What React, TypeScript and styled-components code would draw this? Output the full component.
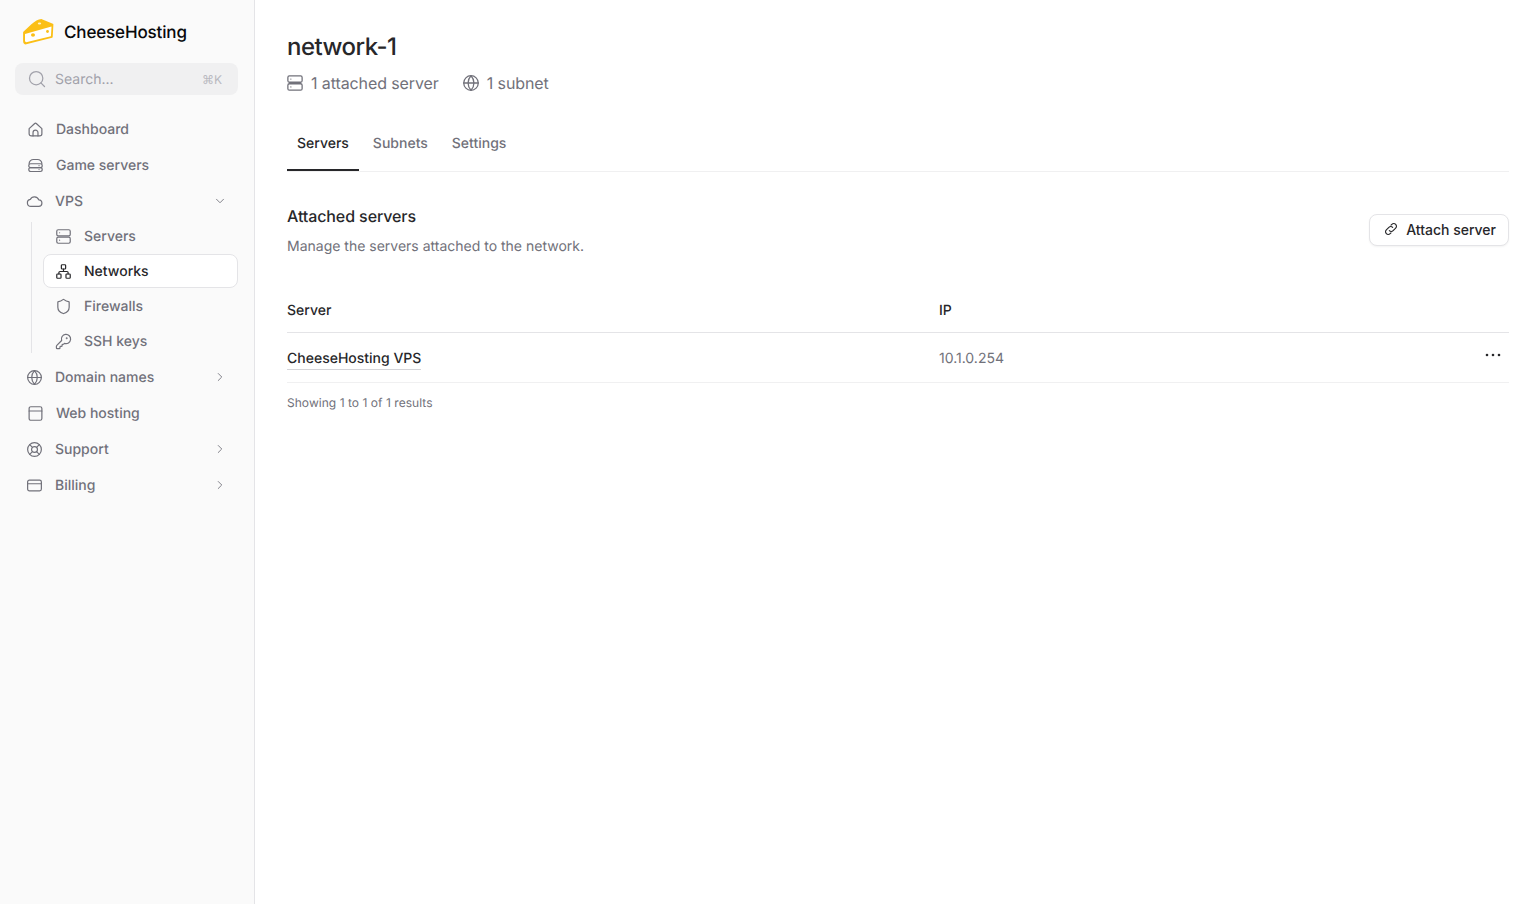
import React from "react";
import styled, { createGlobalStyle } from "styled-components";
import { ChevronDown, ChevronRight, KeyRound, Search } from "lucide-react";

const GlobalStyle = createGlobalStyle`
  html, body { margin: 0; padding: 0; height: 100%; background: #fff; }
  body {
    font-family: Inter, "Liberation Sans", sans-serif;
    color: #27272a;
    text-rendering: geometricPrecision;
  }
  #root { height: 100%; }
`;

type IconProps = { size?: number };

const Svg = ({ size = 17, children }: IconProps & { children: React.ReactNode }) => (
  <svg width={size} height={size} viewBox="0 0 24 24" fill="none" stroke="currentColor" strokeWidth={1.7} strokeLinecap="round" strokeLinejoin="round">
    {children}
  </svg>
);

const CheeseLogo = () => (
  <svg width="32" height="26" viewBox="0 0 32 26">
    <path d="M2 13.5 L10 6 Q15 1.5 19.5 1 L30.5 5.5 L29.8 18 L4 24.5 Q2 24.5 2 22 Z" fill="#fbbf16" stroke="#fbbf16" strokeWidth="1.8" strokeLinejoin="round" />
    <path d="M3 15 L29.5 7.5 L28.9 17.2 L4.2 23.3 Q3 23.3 3 21.6 Z" fill="#fff" />
    <ellipse cx="17.5" cy="4.5" rx="1.7" ry="1.1" fill="#fff3c4" />
    <ellipse cx="11" cy="16" rx="2" ry="1.7" fill="#fbbf16" />
    <circle cx="25.5" cy="12.5" r="1.4" fill="#fbbf16" />
  </svg>
);

const HomeIcon = ({ size }: IconProps) => (
  <Svg size={size}>
    <path d="M3 10.8 10.5 3.8a2.2 2.2 0 0 1 3 0L21 10.8V18a3 3 0 0 1-3 3H6a3 3 0 0 1-3-3Z" />
    <path d="M8.5 21v-4.5a3.5 3.5 0 0 1 7 0V21" />
  </Svg>
);

const ServerIcon = ({ size }: IconProps) => (
  <Svg size={size}>
    <rect x="2.5" y="2.5" width="19" height="8.5" rx="2" />
    <rect x="2.5" y="13" width="19" height="8.5" rx="2" />
    <path d="M6.5 6.7h.01M6.5 17.2h.01" />
  </Svg>
);

const GameServerIcon = ({ size }: IconProps) => (
  <Svg size={size}>
    <path d="M3 9.5 C3 6 6 3.5 9 3.5 h6 c3 0 6 2.5 6 6" />
    <rect x="2.5" y="9.5" width="19" height="5.5" rx="2.7" />
    <rect x="2.5" y="15" width="19" height="5.5" rx="2.7" />
    <path d="M17 12.2h.01M17 17.8h.01" />
  </Svg>
);

const CloudIcon = ({ size }: IconProps) => (
  <Svg size={size}>
    <path d="M17.5 19H7a5 5 0 0 1-1-9.9A6.5 6.5 0 0 1 18 9.6a4.7 4.7 0 0 1-.5 9.4Z" />
  </Svg>
);

const NetworkIcon = ({ size }: IconProps) => (
  <Svg size={size}>
    <rect x="9" y="2.5" width="6" height="6" rx="1.2" />
    <rect x="2.5" y="15.5" width="6" height="6" rx="1.2" />
    <rect x="15.5" y="15.5" width="6" height="6" rx="1.2" />
    <path d="M5.5 15.5V13.5a1.5 1.5 0 0 1 1.5-1.5h10a1.5 1.5 0 0 1 1.5 1.5v2M12 8.5V12" />
  </Svg>
);

const ShieldIcon = ({ size }: IconProps) => (
  <Svg size={size}>
    <path d="M20 13c0 5-3.5 7.5-7.66 8.95a1 1 0 0 1-.67-.01C7.5 20.5 4 18 4 13V6a1 1 0 0 1 1-1c2 0 4.5-1.2 6.24-2.72a1.17 1.17 0 0 1 1.52 0C14.51 3.81 17 5 19 5a1 1 0 0 1 1 1z" />
  </Svg>
);

const GlobeIcon = ({ size }: IconProps) => (
  <Svg size={size}>
    <circle cx="12" cy="12" r="9.7" />
    <path d="M12 2.3a14 14 0 0 0 0 19.4 14 14 0 0 0 0-19.4ZM2.3 12h19.4" />
  </Svg>
);

const WebIcon = ({ size }: IconProps) => (
  <Svg size={size}>
    <rect x="3" y="2.5" width="18" height="19" rx="2.5" />
    <path d="M3 8.5h18" />
  </Svg>
);

const SupportIcon = ({ size }: IconProps) => (
  <Svg size={size}>
    <circle cx="12" cy="12" r="9.7" />
    <circle cx="12" cy="12" r="4.2" />
    <path d="m5.2 5.2 3.9 3.9M14.9 14.9l3.9 3.9M18.8 5.2l-3.9 3.9M9.1 14.9l-3.9 3.9" />
  </Svg>
);

const CardIcon = ({ size }: IconProps) => (
  <Svg size={size}>
    <rect x="2.3" y="4.5" width="19.4" height="15" rx="2.5" />
    <path d="M2.3 9.5h19.4" />
  </Svg>
);

const LinkIcon = ({ size }: IconProps) => (
  <Svg size={size}>
    <path d="M9.5 14.5a4 4 0 0 0 5.7 0l3.8-3.8a4 4 0 0 0-5.7-5.7L12 6.3" />
    <path d="M14.5 9.5a4 4 0 0 0-5.7 0L5 13.3a4 4 0 0 0 5.7 5.7l1.3-1.3" />
  </Svg>
);

const DotsIcon = () => (
  <svg width="16" height="4" viewBox="0 0 16 4" fill="currentColor">
    <circle cx="2" cy="2" r="1.3" />
    <circle cx="8" cy="2" r="1.3" />
    <circle cx="14" cy="2" r="1.3" />
  </svg>
);

const Page = styled.div`
  display: flex;
  height: 904px;
  overflow: hidden;
`;

const Sidebar = styled.aside`
  box-sizing: border-box;
  width: 255px;
  flex: none;
  background: #fafafa;
  border-right: 1px solid #e4e4e7;
  padding: 16px 16px 0 15px;
`;

const Brand = styled.div`
  display: flex;
  align-items: center;
  gap: 10px;
  height: 32px;
  padding-left: 7px;
  font-size: 17px;
  font-weight: 500;
  letter-spacing: -0.15px;
  color: #09090b;
`;

const BrandName = styled.span`
  padding-top: 2px;
`;

const SearchBox = styled.div`
  display: flex;
  align-items: center;
  height: 32px;
  margin-top: 15px;
  padding: 0 16px 0 12px;
  border-radius: 8px;
  background: #f0f0f1;
  color: #a1a1aa;
  font-size: 14px;
`;

const SearchLabel = styled.span`
  flex: 1;
  margin-left: 8px;
`;

const Shortcut = styled.span`
  font-size: 12px;
  color: #b9b9c0;
`;

const Nav = styled.nav`
  display: flex;
  flex-direction: column;
  margin-top: 16px;
`;

const IconSlot = styled.span`
  flex: none;
  display: flex;
  justify-content: center;
  align-items: center;
  width: 16px;
  height: 16px;
  & > svg { flex: none; }
`;

const NavRow = styled.div<{ $tight?: boolean }>`
  display: flex;
  align-items: center;
  gap: 12px;
  height: 36px;
  padding-left: ${(p) => (p.$tight ? "12px" : "13px")};
  color: #71717a;
  font-size: 14px;
  font-weight: 500;

  ${IconSlot} > svg { margin-left: -1px; }
`;

const NavLabel = styled.span`
  flex: 1;
`;

const Caret = styled.span`
  display: flex;
  margin-right: 11px;
  color: #71717a;
`;

const SubNav = styled.div`
  position: relative;
  display: flex;
  flex-direction: column;
  margin-left: 28px;

  &::before {
    content: "";
    position: absolute;
    left: -12px;
    top: 3px;
    bottom: 6px;
    width: 1px;
    background: #e4e4e7;
  }
`;

const SubRow = styled.div<{ $active?: boolean }>`
  box-sizing: border-box;
  display: flex;
  align-items: center;
  gap: 12px;
  height: 34px;
  margin-bottom: 1px;
  padding-left: 12px;
  font-size: 14px;
  font-weight: 500;
  border-radius: 8px;
  color: ${(p) => (p.$active ? "#27272a" : "#71717a")};
  background: ${(p) => (p.$active ? "#fff" : "transparent")};
  border: 1px solid ${(p) => (p.$active ? "#e4e4e7" : "transparent")};

  ${IconSlot} > svg { margin-left: -1px; }
`;

const Main = styled.main`
  flex: 1;
  min-width: 0;
  padding: 31px 30px 0 32px;
`;

const Title = styled.h1`
  margin: 0;
  font-size: 24px;
  line-height: 32px;
  font-weight: 500;
  letter-spacing: -0.5px;
  color: #27272a;
`;

const Meta = styled.div`
  display: flex;
  align-items: center;
  gap: 24px;
  height: 24px;
  margin-top: 8px;
  color: #71717a;
  font-size: 16px;
  letter-spacing: -0.1px;
`;

const MetaItem = styled.span`
  display: flex;
  align-items: center;
  gap: 8px;
`;

const Tabs = styled.div`
  display: flex;
  gap: 4px;
  height: 56px;
  margin-top: 20px;
  border-bottom: 1px solid #f0f0f1;
`;

const Tab = styled.div<{ $active?: boolean }>`
  display: flex;
  align-items: center;
  height: 56px;
  padding: 0 10px;
  box-sizing: border-box;
  font-size: 14px;
  font-weight: 500;
  color: ${(p) => (p.$active ? "#27272a" : "#71717a")};
  box-shadow: ${(p) => (p.$active ? "inset 0 -2px 0 #27272a" : "none")};
`;

const SectionHead = styled.div`
  display: flex;
  align-items: flex-start;
  justify-content: space-between;
  margin-top: 32px;
`;

const SectionTitle = styled.h2`
  margin: 0;
  font-size: 16px;
  line-height: 24px;
  font-weight: 500;
  letter-spacing: -0.1px;
  color: #27272a;
`;

const SectionText = styled.p`
  margin: 8px 0 0;
  font-size: 14px;
  line-height: 22px;
  color: #71717a;
`;

const Button = styled.button`
  display: flex;
  align-items: center;
  gap: 7px;
  height: 32px;
  margin-top: 10px;
  padding: 0 12px 2px 13px;
  border: 1px solid #e4e4e7;
  border-radius: 8px;
  background: #fff;
  box-shadow: 0 1px 2px rgba(0, 0, 0, 0.05);
  font: 500 14px Inter, sans-serif;
  color: #27272a;
`;

const Table = styled.div`
  margin-top: 27px;
`;

const TableRow = styled.div<{ $height: number; $strong?: boolean; $drop?: number }>`
  box-sizing: border-box;
  display: grid;
  grid-template-columns: 652px 1fr 32px;
  align-items: center;
  height: ${(p) => p.$height}px;
  padding-top: ${(p) => p.$drop ?? 0}px;
  border-bottom: 1px solid ${(p) => (p.$strong ? "#e4e4e7" : "#f0f0f1")};
  font-size: 14px;
`;

const HeadCell = styled.div`
  font-weight: 500;
  color: #27272a;
`;

const ServerLink = styled.span`
  justify-self: start;
  margin-top: 4px;
  font-weight: 500;
  color: #27272a;
  border-bottom: 1px solid #d4d4d8;
  line-height: 20px;
`;

const IpCell = styled.div`
  margin-top: 3px;
  line-height: 20px;
  color: #71717a;
`;

const RowMenu = styled.div`
  display: flex;
  justify-content: center;
  margin-top: -6px;
  color: #27272a;
`;

const Footnote = styled.div`
  margin-top: 12px;
  font-size: 12px;
  line-height: 16px;
  letter-spacing: 0.04px;
  color: #71717a;
`;

const App = () => (
  <>
    <GlobalStyle />
    <Page>
      <Sidebar>
        <Brand>
          <CheeseLogo />
          <BrandName>CheeseHosting</BrandName>
        </Brand>
        <SearchBox>
          <Search size={20} strokeWidth={1.5} />
          <SearchLabel>Search...</SearchLabel>
          <Shortcut>⌘K</Shortcut>
        </SearchBox>
        <Nav>
          <NavRow>
            <IconSlot><HomeIcon /></IconSlot>
            <NavLabel>Dashboard</NavLabel>
          </NavRow>
          <NavRow>
            <IconSlot><GameServerIcon /></IconSlot>
            <NavLabel>Game servers</NavLabel>
          </NavRow>
          <NavRow $tight>
            <IconSlot><CloudIcon /></IconSlot>
            <NavLabel>VPS</NavLabel>
            <Caret><ChevronDown size={14} strokeWidth={1.5} /></Caret>
          </NavRow>
          <SubNav>
            <SubRow>
              <IconSlot><ServerIcon /></IconSlot>
              Servers
            </SubRow>
            <SubRow $active>
              <IconSlot><NetworkIcon /></IconSlot>
              Networks
            </SubRow>
            <SubRow>
              <IconSlot><ShieldIcon /></IconSlot>
              Firewalls
            </SubRow>
            <SubRow>
              <IconSlot><KeyRound size={17} strokeWidth={1.7} /></IconSlot>
              SSH keys
            </SubRow>
          </SubNav>
          <NavRow $tight>
            <IconSlot><GlobeIcon /></IconSlot>
            <NavLabel>Domain names</NavLabel>
            <Caret><ChevronRight size={14} strokeWidth={1.5} /></Caret>
          </NavRow>
          <NavRow>
            <IconSlot><WebIcon /></IconSlot>
            <NavLabel>Web hosting</NavLabel>
          </NavRow>
          <NavRow $tight>
            <IconSlot><SupportIcon /></IconSlot>
            <NavLabel>Support</NavLabel>
            <Caret><ChevronRight size={14} strokeWidth={1.5} /></Caret>
          </NavRow>
          <NavRow $tight>
            <IconSlot><CardIcon /></IconSlot>
            <NavLabel>Billing</NavLabel>
            <Caret><ChevronRight size={14} strokeWidth={1.5} /></Caret>
          </NavRow>
        </Nav>
      </Sidebar>
      <Main>
        <Title>network-1</Title>
        <Meta>
          <MetaItem>
            <IconSlot><ServerIcon size={18} /></IconSlot>
            1 attached server
          </MetaItem>
          <MetaItem>
            <IconSlot><GlobeIcon size={18} /></IconSlot>
            1 subnet
          </MetaItem>
        </Meta>
        <Tabs>
          <Tab $active>Servers</Tab>
          <Tab>Subnets</Tab>
          <Tab>Settings</Tab>
        </Tabs>
        <SectionHead>
          <div>
            <SectionTitle>Attached servers</SectionTitle>
            <SectionText>Manage the servers attached to the network.</SectionText>
          </div>
          <Button>
            <IconSlot><LinkIcon size={16} /></IconSlot>
            Attach server
          </Button>
        </SectionHead>
        <Table>
          <TableRow $height={48} $drop={4} $strong>
            <HeadCell>Server</HeadCell>
            <HeadCell>IP</HeadCell>
          </TableRow>
          <TableRow $height={50}>
            <ServerLink>CheeseHosting VPS</ServerLink>
            <IpCell>10.1.0.254</IpCell>
            <RowMenu><DotsIcon /></RowMenu>
          </TableRow>
        </Table>
        <Footnote>Showing 1 to 1 of 1 results</Footnote>
      </Main>
    </Page>
  </>
);

export default App;
